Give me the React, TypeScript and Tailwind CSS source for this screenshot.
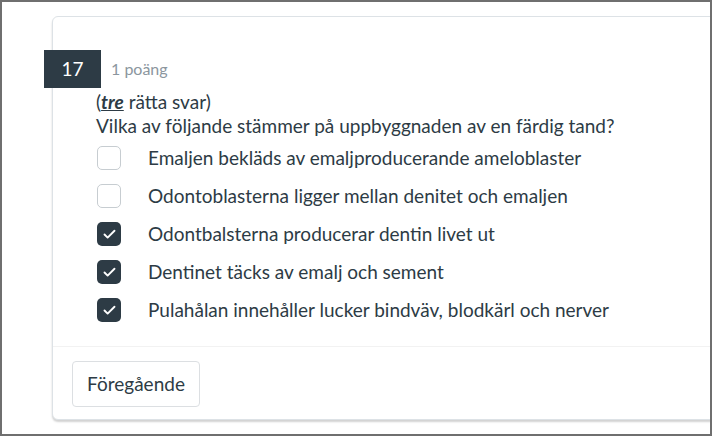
import { Check } from "lucide-react";

type Answer = { text: string; checked: boolean };

const answers: Answer[] = [
  { text: "Emaljen bekläds av emaljproducerande ameloblaster", checked: false },
  { text: "Odontoblasterna ligger mellan denitet och emaljen", checked: false },
  { text: "Odontbalsterna producerar dentin livet ut", checked: true },
  { text: "Dentinet täcks av emalj och sement", checked: true },
  { text: "Pulahålan innehåller lucker bindväv, blodkärl och nerver", checked: true },
];

export default function App() {
  return (
    <div
      className="h-[436px] w-[712px] overflow-hidden border-2 border-[#6f6f6f] bg-white pl-[50px] pt-[14px] text-[#2d3b45]"
      style={{ fontFamily: "Lato, 'Noto Sans', sans-serif" }}
    >
      <div className="w-[720px] rounded-md border border-[#dde2e6] bg-white shadow-[0_2px_2px_rgba(0,0,0,0.18)]">
        <div className="pb-[24px] pt-[33px]">
          <div className="flex items-center">
            <div className="-ml-[9px] flex h-[38px] w-[57px] items-center justify-center bg-[#2d3b45] text-[19px] text-white">
              17
            </div>
            <div className="ml-[10px] text-[16px] text-[#8b969e]">1 poäng</div>
          </div>
          <div className="ml-[43px] mt-[2px] text-[19px] leading-[24px]">
            <div>
              (<em className="font-bold underline">tre</em> rätta svar)
            </div>
            <div>Vilka av följande stämmer på uppbyggnaden av en färdig tand?</div>
          </div>
          <div className="ml-[44px] mt-[8px] flex flex-col gap-[14px]">
            {answers.map((a) => (
              <label key={a.text} className="flex items-center gap-[27px]">
                {a.checked ? (
                  <span className="flex h-[24px] w-[24px] items-center justify-center rounded-[5px] bg-[#2d3b45]">
                    <Check size={15} strokeWidth={3} className="text-white" />
                  </span>
                ) : (
                  <span className="h-[24px] w-[24px] rounded-[5px] border border-[#c7cdd1] bg-white" />
                )}
                <span className="text-[19px] leading-[24px]">{a.text}</span>
              </label>
            ))}
          </div>
        </div>
        <div className="border-t border-[#f2f2f2] px-[19px] pb-[12px] pt-[14px]">
          <button
            type="button"
            className="h-[46px] w-[128px] rounded-[4px] border border-[#dcdfe2] bg-white text-[19px] text-[#2d3b45]"
          >
            Föregående
          </button>
        </div>
      </div>
    </div>
  );
}
